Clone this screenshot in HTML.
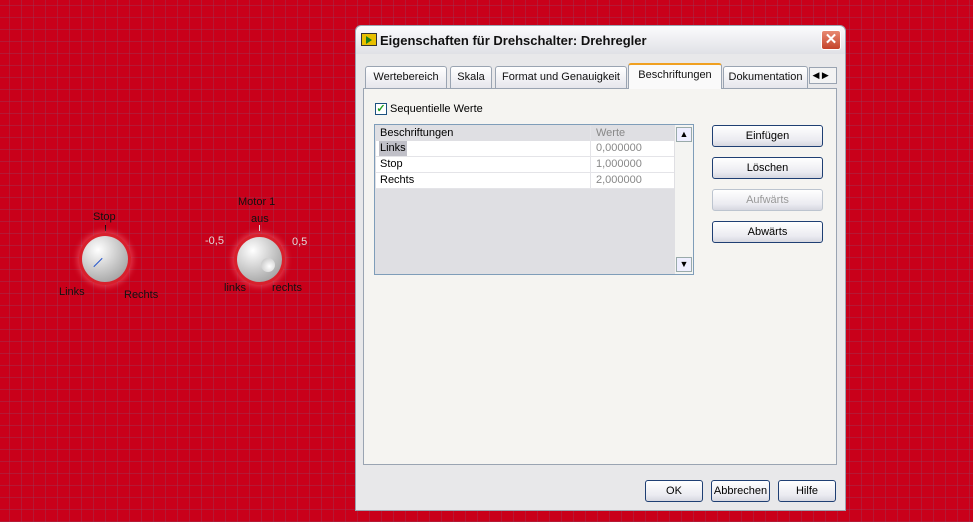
<!DOCTYPE html>
<html><head><style>
*{box-sizing:border-box}
body{margin:0;width:973px;height:522px;overflow:hidden;position:relative;font-family:"Liberation Sans",Tahoma,sans-serif;font-size:11px;
background-color:#c9001a;
background-image:linear-gradient(to right,rgba(150,60,90,.4) 1px,transparent 1px),linear-gradient(to bottom,rgba(150,60,90,.4) 1px,transparent 1px);
background-size:12px 12px;background-position:9px 5px;}
.a{position:absolute}
.dlg{left:355px;top:25px;width:491px;height:486px;background:#e8e8ea;border:1px solid #9da3b0;border-radius:6px 6px 0 0;}
.title{left:0;top:0;width:489px;height:28px;background:linear-gradient(#fbfbfd,#e0e1e6);border-radius:6px 6px 0 0;font-weight:bold;font-size:13px;color:#111}
.tab{top:40px;height:22px;border:1px solid #9aa4b2;border-bottom:none;background:linear-gradient(#fff,#e6e6ec);border-radius:3px 3px 0 0;text-align:center;line-height:20px;color:#111}
.panel{left:7px;top:62px;width:474px;height:377px;background:#f5f4f1;border:1px solid #9aa4b2}
.btn{width:111px;height:22px;border:1px solid #1f3f73;border-radius:3px;background:linear-gradient(#fff,#ebebf1 70%,#d6d7e0);text-align:center;line-height:20px;color:#000}
.row{left:1px;width:298px;height:16px;background:#fff;border-bottom:1px solid #e4e4e8;line-height:15px}
.knob{border-radius:50%;background:radial-gradient(circle at 35% 30%,#fff 0,#ddd 30%,#aaa 75%,#888 100%);box-shadow:0 0 0 3px #d8202c,0 0 6px 5px rgba(255,120,130,.45)}
.lbl{color:#111;font-size:11px}
</style></head><body>
<div class="a lbl" style="left:93px;top:211px">Stop</div>
<div class="a" style="left:105px;top:225px;width:1px;height:6px;background:#111"></div>
<div class="a knob" style="left:82px;top:236px;width:46px;height:46px"></div>
<div class="a" style="left:92px;top:262px;width:12px;height:1px;background:#2255cc;transform:rotate(-45deg)"></div>
<div class="a lbl" style="left:59px;top:286px">Links</div>
<div class="a lbl" style="left:124px;top:289px">Rechts</div>
<div class="a lbl" style="left:238px;top:196px">Motor 1</div>
<div class="a lbl" style="left:251px;top:213px">aus</div>
<div class="a" style="left:259px;top:225px;width:1px;height:6px;background:#ddd"></div>
<div class="a" style="left:205px;top:235px;color:#ddd">-0,5</div>
<div class="a" style="left:292px;top:236px;color:#ddd">0,5</div>
<div class="a knob" style="left:237px;top:237px;width:45px;height:45px"></div>
<div class="a" style="left:261px;top:258px;width:14px;height:14px;border-radius:50%;background:radial-gradient(circle at 60% 60%,#fff,#bbb)"></div>
<div class="a lbl" style="left:224px;top:282px">links</div>
<div class="a lbl" style="left:272px;top:282px">rechts</div>
<div class="a dlg">
 <div class="a title">
  <div class="a" style="left:5px;top:7px;width:16px;height:13px;background:#e8c000;border:1px solid #333"><div class="a" style="left:4px;top:2px;width:0;height:0;border-left:6px solid #1a7f1a;border-top:4px solid transparent;border-bottom:4px solid transparent"></div></div>
  <div class="a" style="left:24px;top:7px">Eigenschaften für Drehschalter: Drehregler</div>
  <div class="a" style="left:465px;top:4px;width:20px;height:20px;border:1px solid #fff;border-radius:3px;background:linear-gradient(#e88a72,#c4432a);color:#fff;font-size:15px;line-height:18px;text-align:center;font-weight:bold">✕</div>
 </div>
 <div class="a tab" style="left:9px;width:82px">Wertebereich</div>
 <div class="a tab" style="left:94px;width:42px">Skala</div>
 <div class="a tab" style="left:139px;width:132px">Format und Genauigkeit</div>
 <div class="a tab" style="left:272px;top:37px;height:26px;width:94px;background:#fafafa;border-top:2px solid #f0a020;z-index:2">Beschriftungen</div>
 <div class="a tab" style="left:367px;width:85px">Dokumentation</div>
 <div class="a" style="left:453px;top:41px;width:28px;height:17px;border:1px solid #9aa4b2;background:#f3f3f3;font-size:9px;line-height:15px">&nbsp;◀ ▶</div>
 <div class="a panel">
  <div class="a" style="left:11px;top:14px;width:12px;height:12px;border:1px solid #1c5180;background:#fff;color:#21a121;font-size:11px;line-height:10px;text-align:center;font-weight:bold">✓</div>
  <div class="a" style="left:26px;top:14px">Sequentielle Werte</div>
  <div class="a" style="left:10px;top:35px;width:320px;height:151px;border:1px solid #7f9db9;background:#dfdfe3">
   <div class="a" style="left:1px;top:1px;width:298px;height:15px;background:#dfdfe3;line-height:14px"><span class="a" style="left:4px">Beschriftungen</span><span class="a" style="left:220px;color:#888">Werte</span></div>
   <div class="a row" style="top:16px"><span class="a" style="left:3px;top:0;background:#c0c0c8;padding:0 1px">Links</span><span class="a" style="left:220px;color:#888">0,000000</span></div>
   <div class="a row" style="top:32px"><span class="a" style="left:4px">Stop</span><span class="a" style="left:220px;color:#888">1,000000</span></div>
   <div class="a row" style="top:48px"><span class="a" style="left:4px">Rechts</span><span class="a" style="left:220px;color:#888">2,000000</span></div>
   <div class="a" style="left:215px;top:1px;width:1px;height:63px;background:#e4e4e8"></div>
   <div class="a" style="left:300px;top:0;width:18px;height:149px;background:#f4f4f2"></div>
   <div class="a" style="left:301px;top:2px;width:16px;height:15px;border:1px solid #9aa;background:#eef;text-align:center;font-size:9px;line-height:13px">▲</div>
   <div class="a" style="left:301px;top:132px;width:16px;height:15px;border:1px solid #9aa;background:#eef;text-align:center;font-size:9px;line-height:13px">▼</div>
  </div>
  <div class="a btn" style="left:348px;top:36px">Einfügen</div>
  <div class="a btn" style="left:348px;top:68px">Löschen</div>
  <div class="a btn" style="left:348px;top:100px;border-color:#bcc4cf;color:#999">Aufwärts</div>
  <div class="a btn" style="left:348px;top:132px">Abwärts</div>
 </div>
 <div class="a btn" style="left:289px;top:454px;width:58px">OK</div>
 <div class="a btn" style="left:355px;top:454px;width:59px">Abbrechen</div>
 <div class="a btn" style="left:422px;top:454px;width:58px">Hilfe</div>
</div>
</body></html>
